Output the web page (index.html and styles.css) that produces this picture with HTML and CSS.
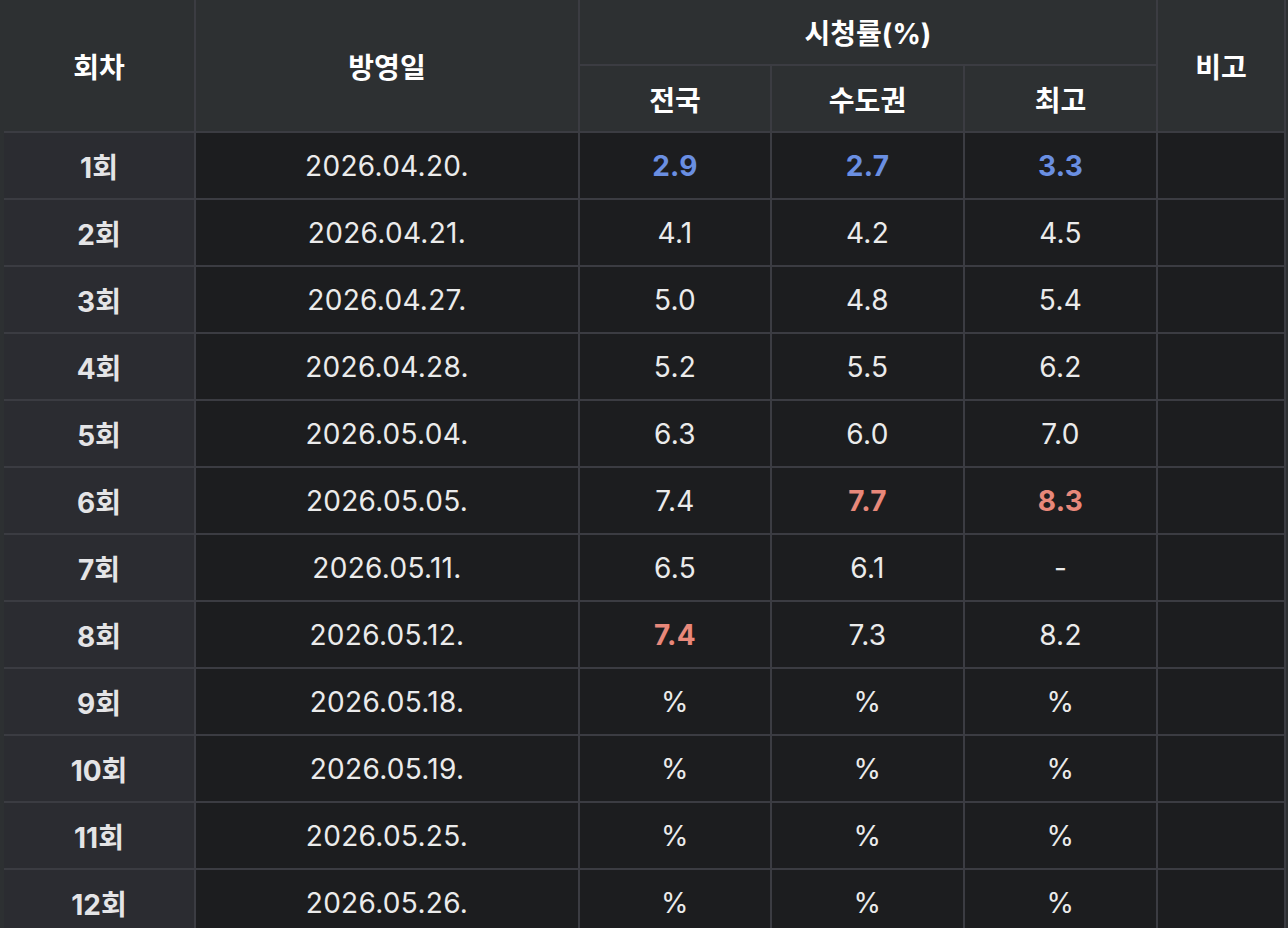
FILE: index.html
```html
<!DOCTYPE html>
<html lang="ko">
<head>
<meta charset="utf-8">
<title>시청률</title>
<link rel="stylesheet" href="styles.css">
</head>
<body>
<div class="ratings">
  <div class="cell head tall">회차</div>
  <div class="cell head tall">방영일</div>
  <div class="cell head group">시청률(%)</div>
  <div class="cell head tall">비고</div>
  <div class="cell head">전국</div>
  <div class="cell head">수도권</div>
  <div class="cell head">최고</div>

  <div class="cell ep">1회</div><div class="cell">2026.04.20.</div><div class="cell low">2.9</div><div class="cell low">2.7</div><div class="cell low">3.3</div><div class="cell"></div>
  <div class="cell ep">2회</div><div class="cell">2026.04.21.</div><div class="cell">4.1</div><div class="cell">4.2</div><div class="cell">4.5</div><div class="cell"></div>
  <div class="cell ep">3회</div><div class="cell">2026.04.27.</div><div class="cell">5.0</div><div class="cell">4.8</div><div class="cell">5.4</div><div class="cell"></div>
  <div class="cell ep">4회</div><div class="cell">2026.04.28.</div><div class="cell">5.2</div><div class="cell">5.5</div><div class="cell">6.2</div><div class="cell"></div>
  <div class="cell ep">5회</div><div class="cell">2026.05.04.</div><div class="cell">6.3</div><div class="cell">6.0</div><div class="cell">7.0</div><div class="cell"></div>
  <div class="cell ep">6회</div><div class="cell">2026.05.05.</div><div class="cell">7.4</div><div class="cell high">7.7</div><div class="cell high">8.3</div><div class="cell"></div>
  <div class="cell ep">7회</div><div class="cell">2026.05.11.</div><div class="cell">6.5</div><div class="cell">6.1</div><div class="cell">-</div><div class="cell"></div>
  <div class="cell ep">8회</div><div class="cell">2026.05.12.</div><div class="cell high">7.4</div><div class="cell">7.3</div><div class="cell">8.2</div><div class="cell"></div>
  <div class="cell ep">9회</div><div class="cell">2026.05.18.</div><div class="cell">%</div><div class="cell">%</div><div class="cell">%</div><div class="cell"></div>
  <div class="cell ep">10회</div><div class="cell">2026.05.19.</div><div class="cell">%</div><div class="cell">%</div><div class="cell">%</div><div class="cell"></div>
  <div class="cell ep">11회</div><div class="cell">2026.05.25.</div><div class="cell">%</div><div class="cell">%</div><div class="cell">%</div><div class="cell"></div>
  <div class="cell ep">12회</div><div class="cell">2026.05.26.</div><div class="cell">%</div><div class="cell">%</div><div class="cell">%</div><div class="cell"></div>
</div>
</body>
</html>
```
FILE: styles.css
```css
html {
  overflow: hidden;
  background: #2d3032;
}
body {
  margin: 0;
  background: #2d3032;
  font-family: Inter, "Noto Sans CJK KR", sans-serif;
  font-size: 28px;
  color: #ebebeb;
}
.ratings {
  display: grid;
  grid-template-columns: 190px 382px 190px 191px 191px 126px;
  grid-template-rows: 64px 65px;
  grid-auto-rows: 65px;
  gap: 2px;
  width: max-content;
  margin-left: 4px;
  padding-right: 2px;
  background: #3b3c42;
}
.cell {
  display: flex;
  align-items: center;
  justify-content: center;
  background: #1c1d1f;
  letter-spacing: 0.3px;
}
.head {
  background: #2d3032;
  color: #ffffff;
  font-weight: 700;
  letter-spacing: 0;
}
.tall {
  grid-row: span 2;
}
.group {
  grid-column: span 3;
}
.ep {
  background: #2b2c31;
  font-weight: 700;
  color: #e4e4e6;
  letter-spacing: 0;
}
.low {
  color: #6a8fe2;
  font-weight: 700;
}
.high {
  color: #e8887a;
  font-weight: 700;
}
```
